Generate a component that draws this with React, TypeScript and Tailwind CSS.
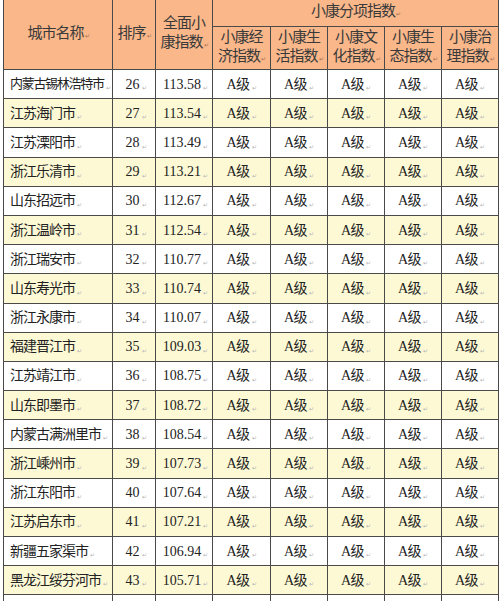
import React from 'react';

// rank, city, overall index — every sub-index in this slice is "A级"
const rows: [number, string, string][] = [
  [26, '内蒙古锡林浩特市', '113.58'],
  [27, '江苏海门市', '113.54'],
  [28, '江苏溧阳市', '113.49'],
  [29, '浙江乐清市', '113.21'],
  [30, '山东招远市', '112.67'],
  [31, '浙江温岭市', '112.54'],
  [32, '浙江瑞安市', '110.77'],
  [33, '山东寿光市', '110.74'],
  [34, '浙江永康市', '110.07'],
  [35, '福建晋江市', '109.03'],
  [36, '江苏靖江市', '108.75'],
  [37, '山东即墨市', '108.72'],
  [38, '内蒙古满洲里市', '108.54'],
  [39, '浙江嵊州市', '107.73'],
  [40, '浙江东阳市', '107.64'],
  [41, '江苏启东市', '107.21'],
  [42, '新疆五家渠市', '106.94'],
  [43, '黑龙江绥芬河市', '105.71'],
];

const cols = 'grid grid-cols-[109px_43px_57px_58px_57px_57px_57px_57px]';
const cell = 'border-r border-b border-[#4a4a4a] flex items-center whitespace-nowrap overflow-hidden';

// Word paragraph mark left in the pasted table
const Mark = () => <span className="ml-[2px] self-end mb-[7px] text-[6px] leading-none tracking-normal text-[#b5b5b5]">↵</span>;

const HeadCell: React.FC<{ lines: string[]; className?: string }> = ({ lines, className = '' }) => (
  <div className={`${cell} justify-center bg-[#f9b78a] ${className}`}>
    <div className="text-center text-[15px] leading-[19px] tracking-[-1px] text-[#3a3a3a]">
      {lines.map((l, i) => (
        <div key={i}>
          {l}
          {i === lines.length - 1 && <span className="text-[6px] text-[#a87050] ml-[1px]">↵</span>}
        </div>
      ))}
    </div>
  </div>
);

export default function App() {
  return (
    <div className="w-[500px] h-[601px] overflow-hidden bg-white pl-[3px] font-['Liberation_Serif','Noto_Sans_CJK_SC',serif] text-[#222]">
      <div className="w-[495px] border-l border-[#4a4a4a]">
        <div className={`${cols} grid-rows-[27px_43px]`}>
          <HeadCell lines={['城市名称']} className="row-span-2" />
          <HeadCell lines={['排序']} className="row-span-2" />
          <HeadCell lines={['全面小', '康指数']} className="row-span-2" />
          <HeadCell lines={['小康分项指数']} className="col-span-5" />
          <HeadCell lines={['小康经', '济指数']} />
          <HeadCell lines={['小康生', '活指数']} />
          <HeadCell lines={['小康文', '化指数']} />
          <HeadCell lines={['小康生', '态指数']} />
          <HeadCell lines={['小康治', '理指数']} />
        </div>
        {rows.map(([rank, city, idx]) => (
          <div key={rank} className={`${cols} h-[29.2px] ${rank % 2 ? 'bg-[#fdf9d5]' : 'bg-white'}`}>
            <div
              className={`${cell} pl-[6px] ${
                city.length > 7 ? 'text-[13px] tracking-[-1.3px]' : 'text-[14px] tracking-[-1px]'
              }`}
            >
              {city}
              <Mark />
            </div>
            <div className={`${cell} justify-center pl-[4px] text-[14px]`}>
              {rank}
              <Mark />
            </div>
            <div className={`${cell} justify-center pl-[3px] text-[14px]`}>
              {idx}
              <Mark />
            </div>
            {[0, 1, 2, 3, 4].map((k) => (
              <div key={k} className={`${cell} justify-center text-[14px] tracking-[-0.5px]`}>
                A级
                <Mark />
              </div>
            ))}
          </div>
        ))}
        <div className={`${cols} h-[29.2px] bg-white`}>
          {[0, 1, 2, 3, 4, 5, 6, 7].map((k) => (
            <div key={k} className={cell} />
          ))}
        </div>
      </div>
    </div>
  );
}
